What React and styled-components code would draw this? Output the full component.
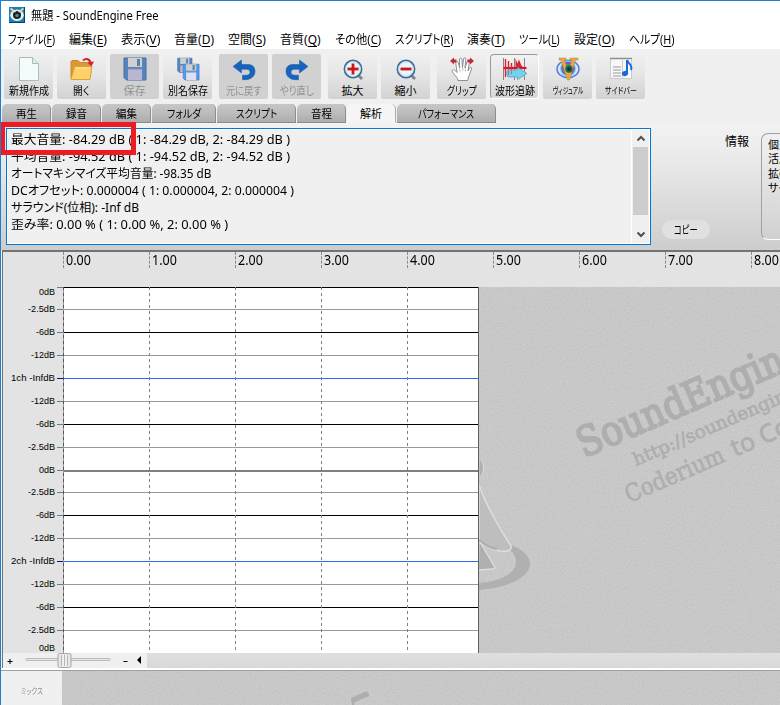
import React, { useLayoutEffect, useRef, useState } from 'react';
import styled, { createGlobalStyle, css } from 'styled-components';

const GlobalStyle = createGlobalStyle`
  * { box-sizing: border-box; }
  body { margin: 0; overflow: hidden; background: #f0f0f0; }
`;

const jp = '"Noto Sans", "Noto Sans CJK JP", sans-serif';

const Window = styled.div`
  width: 780px;
  height: 705px;
  overflow: hidden;
  display: flex;
  flex-direction: column;
  border-top: 1px solid #1a80d6;
  border-left: 1px solid #1a80d6;
  background: #f0f0f0;
  color: #000;
  font-family: ${jp};
  font-size: 12px;
`;

/* Text that is squeezed or stretched to a known width */
const FitBox = styled.span`
  display: inline-block;
  flex: none;
  width: ${(p) => p.$width}px;
  white-space: pre;
  font-feature-settings: "palt";
`;
const FitInner = styled.span`
  display: inline-block;
  transform-origin: 0 50%;
`;
function Fit({ width, children }) {
  const ref = useRef(null);
  const [scale, setScale] = useState(1);
  useLayoutEffect(() => {
    setScale(width / ref.current.offsetWidth);
  }, [width]);
  return (
    <FitBox $width={width}>
      <FitInner ref={ref} style={{ transform: `scaleX(${scale})` }}>{children}</FitInner>
    </FitBox>
  );
}

const TitleBar = styled.header`
  height: 30px;
  flex: none;
  display: flex;
  align-items: center;
  gap: 6px;
  padding: 0 0 2px 8px;
  background: #fff;
`;

const MenuBar = styled.nav`
  height: 18px;
  flex: none;
  display: flex;
  align-items: center;
  gap: 14px;
  padding-left: 7px;
  background: #fff;
  line-height: 18px;
`;
const Accel = styled.span`
  text-decoration: underline;
  text-underline-offset: 2px;
`;

const Toolbar = styled.div`
  height: 55px;
  flex: none;
  display: flex;
  padding: 5px 0 0 3px;
  background: #f0f0f0;
`;
const ToolGroup = styled.div`
  display: flex;
  gap: 4px;
  margin-right: 7px;
`;
const ToolButton = styled.button`
  width: 49px;
  height: 45px;
  padding: 3px 0 0;
  border: 0;
  border-radius: 2px;
  display: flex;
  flex-direction: column;
  align-items: center;
  background: linear-gradient(#f0f0f0, #e4e4e4 50%, #d2d2d2);
  color: #000;
  font-family: ${jp};
  font-size: ${(p) => (p.$small ? 9 : 11)}px;
  line-height: 19px;
  svg { flex: none; display: block; }
  ${(p) => p.$disabled && css`
    background: #d1d1d1;
    color: #919191;
  `}
  ${(p) => p.$pressed && css`
    padding-top: 2px;
    border: 1px solid;
    border-color: #9a9a9a #fff #fff #9a9a9a;
    border-radius: 4px;
    background: linear-gradient(#f2f2f2, #d8d8d8);
  `}
`;

const TabStrip = styled.div`
  height: 19px;
  flex: none;
  display: flex;
  gap: 1px;
  padding-left: 1px;
`;
const Tab = styled.div`
  width: ${(p) => p.$width}px;
  height: 19px;
  display: flex;
  justify-content: center;
  align-items: center;
  border-right: 1px solid #8e8e8e;
  border-bottom: 1px solid #8a8a8a;
  border-radius: 5px 5px 0 0;
  background: linear-gradient(#c6c6c6, #bcbcbc 50%, #adadad);
  font-size: 11px;
  line-height: 17px;
  ${(p) => p.$active && css`
    border-bottom-color: #f4f4f4;
    border-right-color: #aaa;
    background: #f5f5f5;
  `}
`;

const AnalysisPanel = styled.section`
  position: relative;
  height: 127px;
  flex: none;
  display: flex;
  padding: 5px 0 0 5px;
  background: linear-gradient(#f2f2f2, #ededed 20%, #cdcdcd);
`;
const Report = styled.div`
  width: 645px;
  height: 117px;
  flex: none;
  display: flex;
  justify-content: space-between;
  border: 1px solid #0078d7;
  box-shadow: inset 0 0 0 1px #fff;
  padding: 1px;
  background: #f0f0f0;
`;
const ReportLines = styled.div`
  padding: 1px 0 0 3px;
  font-size: 12px;
  line-height: 17px;
  display: flex;
  flex-direction: column;
`;
const ScrollBar = styled.div`
  width: 18px;
  height: 113px;
  border-left: 1px solid #fff;
  display: flex;
  flex-direction: column;
  align-items: center;
  justify-content: space-between;
`;
const ScrollThumb = styled.div`
  width: 15px;
  height: 68px;
  background: #cdcdcd;
`;
const CopyButton = styled.button`
  width: 48px;
  height: 19px;
  flex: none;
  margin: 92px 0 0 11px;
  padding: 0;
  border: 0;
  border-radius: 10px;
  background: #e0e0e0;
  font-family: ${jp};
  font-size: 11px;
  line-height: 19px;
`;
const InfoLabel = styled.div`
  flex: none;
  margin: 6px 0 0 15px;
  line-height: 16px;
`;
const InfoBox = styled.div`
  width: 60px;
  height: 107px;
  flex: none;
  margin: 5px 0 0 12px;
  padding: 4px 0 0 6px;
  border: 1px solid;
  border-color: #a0a0a0 #fff #fff #a0a0a0;
  border-radius: 7px;
  font-size: 11px;
  line-height: 14.300px;
  white-space: pre;
  font-feature-settings: "palt";
`;
const Highlight = styled.div`
  position: absolute;
  left: -1px;
  top: -1px;
  width: 136px;
  height: 33px;
  border: 5px solid #ed1c24;
`;

const Ruler = styled.div`
  height: 37px;
  flex: none;
  display: flex;
  margin-left: 1px;
  padding-left: 60px;
  border-top: 2px solid #737373;
  border-left: 1px solid #737373;
  background: #e3e3e3;
  overflow: hidden;
`;
const RulerCell = styled.div`
  width: 86px;
  height: 16px;
  flex: none;
  padding-left: 2px;
  border-left: 1px dashed #8a8a8a;
  font: 14px/15px "Noto Sans", sans-serif;
`;

const Editor = styled.div`
  height: 366px;
  flex: none;
  display: flex;
  margin-left: 1px;
  border-left: 1px solid #737373;
  background: #c8c8c8;
`;
const Svg = styled.svg`
  display: block;
  flex: none;
`;

const ZoomRow = styled.div`
  height: 15px;
  flex: none;
  display: flex;
  margin-left: 1px;
  border-left: 1px solid #737373;
  background: linear-gradient(#dfdfdf, #d8d8d8);
`;
const ZoomTools = styled.div`
  width: 144px;
  height: 15px;
  background: #f0f0f0;
`;
const Divider = styled.div`
  height: 3px;
  flex: none;
  border-bottom: 1px solid #a0a0a0;
  background: #fff;
`;
const MixRow = styled.div`
  height: 34px;
  flex: none;
  display: flex;
  padding-left: 1px;
`;
const MixLabel = styled.div`
  width: 60px;
  height: 34px;
  flex: none;
  padding-left: 19px;
  background: #f0f0f0;
  color: #8d8d8d;
  font-size: 8px;
  line-height: 39px;
`;

const Icon = ({ children }) => (
  <svg width="24" height="24" viewBox="0 0 24 24" fill="none">{children}</svg>
);

const Floppy = ({ x = 0, y = 0, s = 1, dim }) => (
  <g transform={`translate(${x} ${y}) scale(${s})`}>
    <path d="M1 1h22v22H3.5L1 20.5z" fill={dim ? '#5685bd' : '#4f9ae8'} stroke={dim ? '#426ca5' : '#527fc0'} />
    <path d="M5 1h14v9H5z" fill="#cfd0d2" />
    <path d="M14 2h3v7h-3z" fill="#5c7fac" />
    <path d="M5 12h14v11H5z" fill={dim ? '#b9b6d2' : '#dedff3'} />
    <path d="M5 12h14" stroke="#8792b0" />
  </g>
);
const Magnifier = ({ plus }) => (
  <Icon>
    <path d="M17 18l4 4" stroke="#7f858c" strokeWidth="3" />
    <circle cx="12" cy="12" r="8.6" fill="#e9f4fb" stroke="#396c98" strokeWidth="1.7" />
    <circle cx="12" cy="12" r="7.2" stroke="#c6deee" />
    <path d="M6.5 12h11" stroke="#c8181d" strokeWidth="2.8" />
    {plus && <path d="M12 6.5v11" stroke="#c8181d" strokeWidth="2.8" />}
  </Icon>
);

const icons = {
  create: (
    <Icon>
      <path d="M2.5.5h13l6 6v17h-19z" fill="#f3fbfb" stroke="#a9bcbf" />
      <path d="M15.500.5v6h6" fill="#dcebed" stroke="#a9bcbf" />
    </Icon>
  ),
  open: (
    <Icon>
      <path d="M1 21V4.500l1-1h6l2 2h9v4" fill="#d99a2f" stroke="#c58a2a" />
      <path d="M1 22.500L4.500 9.500H22L20 22.500z" fill="#ffd068" stroke="#dca03c" />
      <path d="M5.500 11H20" stroke="#ffe6a4" />
      <path d="M13 3.500c3-3 7-1.500 8 3.500" stroke="#d3242c" strokeWidth="2" />
      <path d="M17.500 5.500l3.700 4.300L24 4.500z" fill="#d3242c" />
    </Icon>
  ),
  save: <Icon><Floppy dim /></Icon>,
  saveAs: (
    <Icon>
      <Floppy x={1} y={0.5} s={0.65} dim />
      <Floppy x={6.5} y={6.5} s={0.72} />
    </Icon>
  ),
  undo: (
    <Icon>
      <path d="M1 9.500L9.500 3v4.500H16c4.500 0 7 2.700 7 6.700 0 4.800-3.500 8-9 8.500h-3.500v-4.500H14c2.500 0 4-1.200 4-3s-1.200-2.900-3.500-2.900h-5V16z" fill="#1763bd" stroke="#1257ab" strokeWidth=".5" />
    </Icon>
  ),
  redo: (
    <Icon>
      <path d="M23 9.500L14.500 3v4.500H8c-4.500 0-7 2.700-7 6.700 0 4.800 3.500 8 9 8.500h3.500v-4.500H10c-2.500 0-4-1.200-4-3s1.200-2.900 3.500-2.900h5V16z" fill="#1763bd" stroke="#1257ab" strokeWidth=".5" />
    </Icon>
  ),
  zoomIn: <Magnifier plus />,
  zoomOut: <Magnifier />,
  grip: (
    <Icon>
      <path d="M8 23.500c0-3-3-4.500-5.500-8.500-1-2 .5-3 2-2l2.500 2.500L5.800 6c0-2 2-2 2.500 0l1.400 5-.3-8.500c0-1.900 2.300-1.900 2.600 0l.5 8 1-8.500c.3-1.800 2.300-1.500 2.300.3L15 11l2-6c.7-1.800 2.600-1 2.300.8L18 14l1.500-3c1-1.500 2.500-.5 2 1l-3 8-.7 3.500z" fill="#fff" stroke="#858585" strokeWidth=".9" />
      <path d="M9.800 11.500v3M12.800 11v3M15.300 11.500v3" stroke="#bbb" />
      <path d="M0 4l4-3.500v2h2.500v3H4v2zM24 4l-4-3.500v2h-2.500v3H20v2z" fill="#bf2b30" />
    </Icon>
  ),
  wave: (
    <Icon>
      <path d="M.5 1v22M11.500 1v22M21.500 1v22" stroke="#85838b" />
      <path d="M.5 11h23" stroke="#dc1525" strokeWidth="2.200" />
      <path d="M2.500 2v18M5.500 4v15M8.500 6v12" stroke="#dc2230" strokeWidth="1.400" />
      <path d="M12.500 1.500l2 5 1.500-4 2 5 1.500 2.500h-7z" fill="#dc2230" />
      <path d="M5 13h9.500v-2.700L24 16.500l-9.500 6.200V20H5l-1.500-3.500z" fill="#72d3ef" stroke="#5496b3" strokeWidth=".7" />
      <path d="M5.500 14v4M8.500 14v3" stroke="#b56a83" />
    </Icon>
  ),
  visual: (
    <Icon>
      <ellipse cx="12" cy="12" rx="11" ry="8.700" fill="#dbe9ff" stroke="#5d7de5" strokeWidth="1.500" />
      <circle cx="12" cy="11.500" r="8" fill="#6fd3de" />
      <circle cx="12" cy="11.500" r="6.800" fill="#9344d0" />
      <circle cx="12" cy="12" r="5.300" fill="#3aa26d" />
      <path d="M3 1h7v2H8.500l3.500 12L16 3h-2V1h8v2h-2.500l-6 20h-2L5 3H3z" fill="#e4a93f" stroke="#b98a3c" strokeWidth=".5" />
      <circle cx="13" cy="12" r="3.700" fill="#20684e" />
      <circle cx="13" cy="12" r="1.800" fill="#123028" />
    </Icon>
  ),
  sidebar: (
    <Icon>
      <path d="M1.500 1.500h21v20h-21z" fill="#f7f7f7" stroke="#cacaca" />
      <path d="M1 1.500h22" stroke="#8e8e8e" strokeWidth="1.500" />
      <path d="M13.500 3v19" stroke="#ccc" />
      <path d="M4 10h8M4 13h8M4 16h8M4 19h8" stroke="#9b9b9b" />
      <path d="M18 17V3c1 4 6 4 4 10" stroke="#176bd9" strokeWidth="2" />
      <ellipse cx="16" cy="16.500" rx="3.200" ry="2.500" fill="#176bd9" transform="rotate(-15 16 16.500)" />
    </Icon>
  ),
};

const toolGroups = [
  [['create', '新規作成', 40], ['open', '開く', 17], ['save', '保存', 22, 'disabled'], ['saveAs', '別名保存', 40]],
  [['undo', '元に戻す', 36, 'disabled'], ['redo', 'やり直し', 34, 'disabled']],
  [['zoomIn', '拡大', 22], ['zoomOut', '縮小', 22]],
  [['grip', 'グリップ', 30], ['wave', '波形追跡', 40, 'pressed'], ['visual', 'ヴィジュアル', 30, 'small'], ['sidebar', 'サイドバー', 32, 'small']],
];
const menus = [
  ['ファイル', 'F', 47], ['編集', 'E', 38], ['表示', 'V', 39], ['音量', 'D', 40], ['空間', 'S', 38], ['音質', 'Q', 41],
  ['その他', 'C', 46], ['スクリプト', 'R', 58], ['演奏', 'T', 38], ['ツール', 'L', 41], ['設定', 'O', 41], ['ヘルプ', 'H', 46],
];
const tabs = [
  ['再生', 49, 21], ['録音', 49, 21], ['編集', 49, 21], ['フォルダ', 64, 34], ['スクリプト', 79, 41],
  ['音程', 49, 21], ['解析', 49, 22], ['パフォーマンス', 99, 56],
];
const report = [
  ['最大音量: -84.29 dB ( 1: -84.29 dB, 2: -84.29 dB )', 279],
  ['平均音量: -94.52 dB ( 1: -94.52 dB, 2: -94.52 dB )', 279],
  ['オートマキシマイズ平均音量: -98.35 dB', 200],
  ['DCオフセット: 0.000004 ( 1: 0.000004, 2: 0.000004 )', 283],
  ['サラウンド(位相): -Inf dB', 128],
  ['歪み率: 0.00 % ( 1: 0.00 %, 2: 0.00 % )', 217],
];

/* [y, label, line colour, label y] measured from the top of the chart */
const levels = [
  [0, '0dB', '#000', 5], [22, '-2.5dB', '#999'], [45, '-6dB', '#000'], [68, '-12dB', '#999'],
  [91, '1ch -InfdB', '#3366ff'], [114, '-12dB', '#999'], [137, '-6dB', '#000'], [160, '-2.5dB', '#999'],
  [183, '0dB', '#808080'], [205, '-2.5dB', '#999'], [228, '-6dB', '#000'], [251, '-12dB', '#999'],
  [274, '2ch -InfdB', '#3366ff'], [297, '-12dB', '#999'], [320, '-6dB', '#000'], [343, '-2.5dB', '#999'],
  [366, '0dB', null, 361],
];
const labelWidths = { '0dB': 16, '-2.5dB': 27, '-6dB': 19, '-12dB': 24 };

function Levels() {
  return (
    <Svg width="476" height="366">
      <rect width="61" height="366" fill="#e3e3e3" />
      <rect x="61" width="415" height="366" fill="#fff" />
      {levels.map(([y, label, color, labelY = y]) => (
        <g key={y}>
          {color && <rect x="61" y={y} width="414" height={y === 183 ? 2 : 1} fill={color} shapeRendering="crispEdges" />}
          {color && <rect x="54" y={y} width="6" height="1" fill={label.includes('ch') ? '#101070' : '#777'} />}
          <text x="52" y={labelY + 3} textAnchor="end" fontFamily="Liberation Sans" fontSize="9.500" fill="#000"
            textLength={labelWidths[label] || 44} lengthAdjust="spacingAndGlyphs">{label}</text>
        </g>
      ))}
      {[146, 232, 318, 404].map((x) => (
        <path key={x} d={`M${x + 0.5} 0V366`} stroke="#808080" strokeDasharray="3 3" />
      ))}
      <path d="M60.500 0V366" stroke="#999" />
      <path d="M60.500 0V366" stroke="#555" strokeDasharray="3 3" />
      <path d="M475.500 0V366" stroke="#606060" />
    </Svg>
  );
}

const Grain = ({ id, x = 0, y = 0, width, height }) => (
  <>
    <filter id={id} x="0" y="0" width="100%" height="100%" colorInterpolationFilters="sRGB">
      <feTurbulence type="fractalNoise" baseFrequency="0.7" numOctaves="1" seed="9" />
      <feGaussianBlur stdDeviation=".45" />
      <feColorMatrix values=".06 .06 0 0 .724  .06 .06 0 0 .724  .06 .06 0 0 .724  0 0 0 0 1" />
    </filter>
    <rect x={x} y={y} width={width} height={height} filter={`url(#${id})`} />
  </>
);

function Backdrop() {
  return (
    <Svg width="301" height="366" viewBox="479 287 301 366">
      <Grain id="grain" x={479} y={287} width={301} height={366} />
      <g fill="#b0b0b0">
        <path d="M511 545C522 549 530 556 530 564C530 577 508 588 479 590V583C500 582 516 573 516 562C516 557 514 553 510 550z" />
        <path d="M479 485C486 505 500 529 511 546C512 551 506 552 500 551C490 549 486 545 479 542z" fill="#bebebe" stroke="#dedede" strokeWidth="1.500" />
        <path d="M479 540C485 545 490 548 497 549" stroke="#acacac" strokeWidth="2" fill="none" />
        <path d="M480 542L495 567.500Q495 569 492 569L479 570" stroke="#dedede" strokeWidth="1.300" />
        <path d="M479 458C485 462 485 474 479 478z" stroke="#dadada" />
      </g>
      <g fill="#aeaeae" stroke="#aeaeae" strokeWidth=".7" fontFamily="DejaVu Serif">
        <text transform="translate(584 458) rotate(-23.300)" fontSize="41" strokeWidth="2" textLength="243" lengthAdjust="spacingAndGlyphs">SoundEngine</text>
        <text transform="translate(636 466) rotate(-23.300)" fontSize="18" textLength="176" lengthAdjust="spacingAndGlyphs">http://soundengine</text>
        <text transform="translate(629 503) rotate(-23.300)" fontSize="24" textLength="106" lengthAdjust="spacingAndGlyphs">Coderium</text>
        <text transform="translate(735 457) rotate(-23.300)" fontSize="25" fontFamily="Noto Sans" textLength="62" lengthAdjust="spacingAndGlyphs">to Co</text>
      </g>
    </Svg>
  );
}

export default function App() {
  return (
    <Window>
      <GlobalStyle />
      <TitleBar>
        <svg width="16" height="16" viewBox="0 0 16 16">
          <rect width="16" height="16" fill="#1c7fb9" />
          <path d="M0 15.500h16M15.500 0v16" stroke="#0b3f68" />
          <ellipse cx="8" cy="8.300" rx="6.800" ry="5.700" fill="#e9eee6" />
          <circle cx="8" cy="8" r="4" fill="#162127" />
          <circle cx="8" cy="8.500" r="1.700" fill="#4f8c98" />
          <path d="M1.500 1.500l5 3.500M14.500 1.500l-5 3.500" stroke="#e9dca8" strokeWidth="1.600" />
        </svg>
        <Fit width={128}>無題 - SoundEngine Free</Fit>
      </TitleBar>
      <MenuBar>
        {menus.map(([name, key, width]) => (
          <Fit key={key} width={width}>{name}(<Accel>{key}</Accel>)</Fit>
        ))}
      </MenuBar>
      <Toolbar>
        {toolGroups.map((group) => (
          <ToolGroup key={group[0][0]}>
            {group.map(([icon, label, width, state]) => (
              <ToolButton key={icon} $disabled={state === 'disabled'} $pressed={state === 'pressed'} $small={state === 'small'}>
                {icons[icon]}
                <Fit width={width}>{label}</Fit>
              </ToolButton>
            ))}
          </ToolGroup>
        ))}
      </Toolbar>
      <TabStrip>
        {tabs.map(([label, width, textWidth]) => (
          <Tab key={label} $width={width} $active={label === '解析'}>
            <Fit width={textWidth}>{label}</Fit>
          </Tab>
        ))}
      </TabStrip>
      <AnalysisPanel>
        <Report>
          <ReportLines>
            {report.map(([text, width]) => <Fit key={text} width={width}>{text}</Fit>)}
          </ReportLines>
          <ScrollBar>
            <svg width="16" height="17" fill="none" stroke="#505050" strokeWidth="2"><path d="M4.500 10.500l3.500-3.500 3.500 3.500" /></svg>
            <ScrollThumb />
            <svg width="16" height="28" fill="none" stroke="#505050" strokeWidth="2"><path d="M4.500 17.500l3.500 3.500 3.500-3.500" /></svg>
          </ScrollBar>
        </Report>
        <CopyButton><Fit width={24}>コピー</Fit></CopyButton>
        <InfoLabel><Fit width={24}>情報</Fit></InfoLabel>
        <InfoBox>{'個人\n活用\n拡張\nサイト'}</InfoBox>
        <Highlight />
      </AnalysisPanel>
      <Ruler>
        {[0, 1, 2, 3, 4, 5, 6, 7, 8].map((n) => (
          <RulerCell key={n}><Fit width={25}>{`${n}.00`}</Fit></RulerCell>
        ))}
      </Ruler>
      <Editor>
        <Levels />
        <Backdrop />
      </Editor>
      <ZoomRow>
        <ZoomTools>
          <Svg width="144" height="15">
            <path d="M4.500 8.500h5M7 6v5M120.500 8.500h4" stroke="#000" />
            <rect x="22.500" y="5.500" width="85" height="2" rx="1" fill="#e8e8e8" stroke="#bbb" />
            <rect x="55" y="0.500" width="13" height="14" rx="1.500" fill="#e6e6e6" stroke="#a8a8a8" />
            <path d="M58.500 2v11M61.500 2v11M64.500 2v11" stroke="#b6b6b6" />
            <path d="M60 2v11M63 2v11" stroke="#fafafa" />
            <path d="M138 3v8l-4-4z" fill="#000" />
          </Svg>
        </ZoomTools>
      </ZoomRow>
      <Divider />
      <MixRow>
        <MixLabel><Fit width={22}>ミックス</Fit></MixLabel>
        <Svg width="718" height="34">
          <Grain id="grain-mix" width={718} height={34} />
          <path d="M289 27L304 20.500Q307 21 307 25L293 31L292 34H290z" fill="#aeaeae" />
        </Svg>
      </MixRow>
    </Window>
  );
}
